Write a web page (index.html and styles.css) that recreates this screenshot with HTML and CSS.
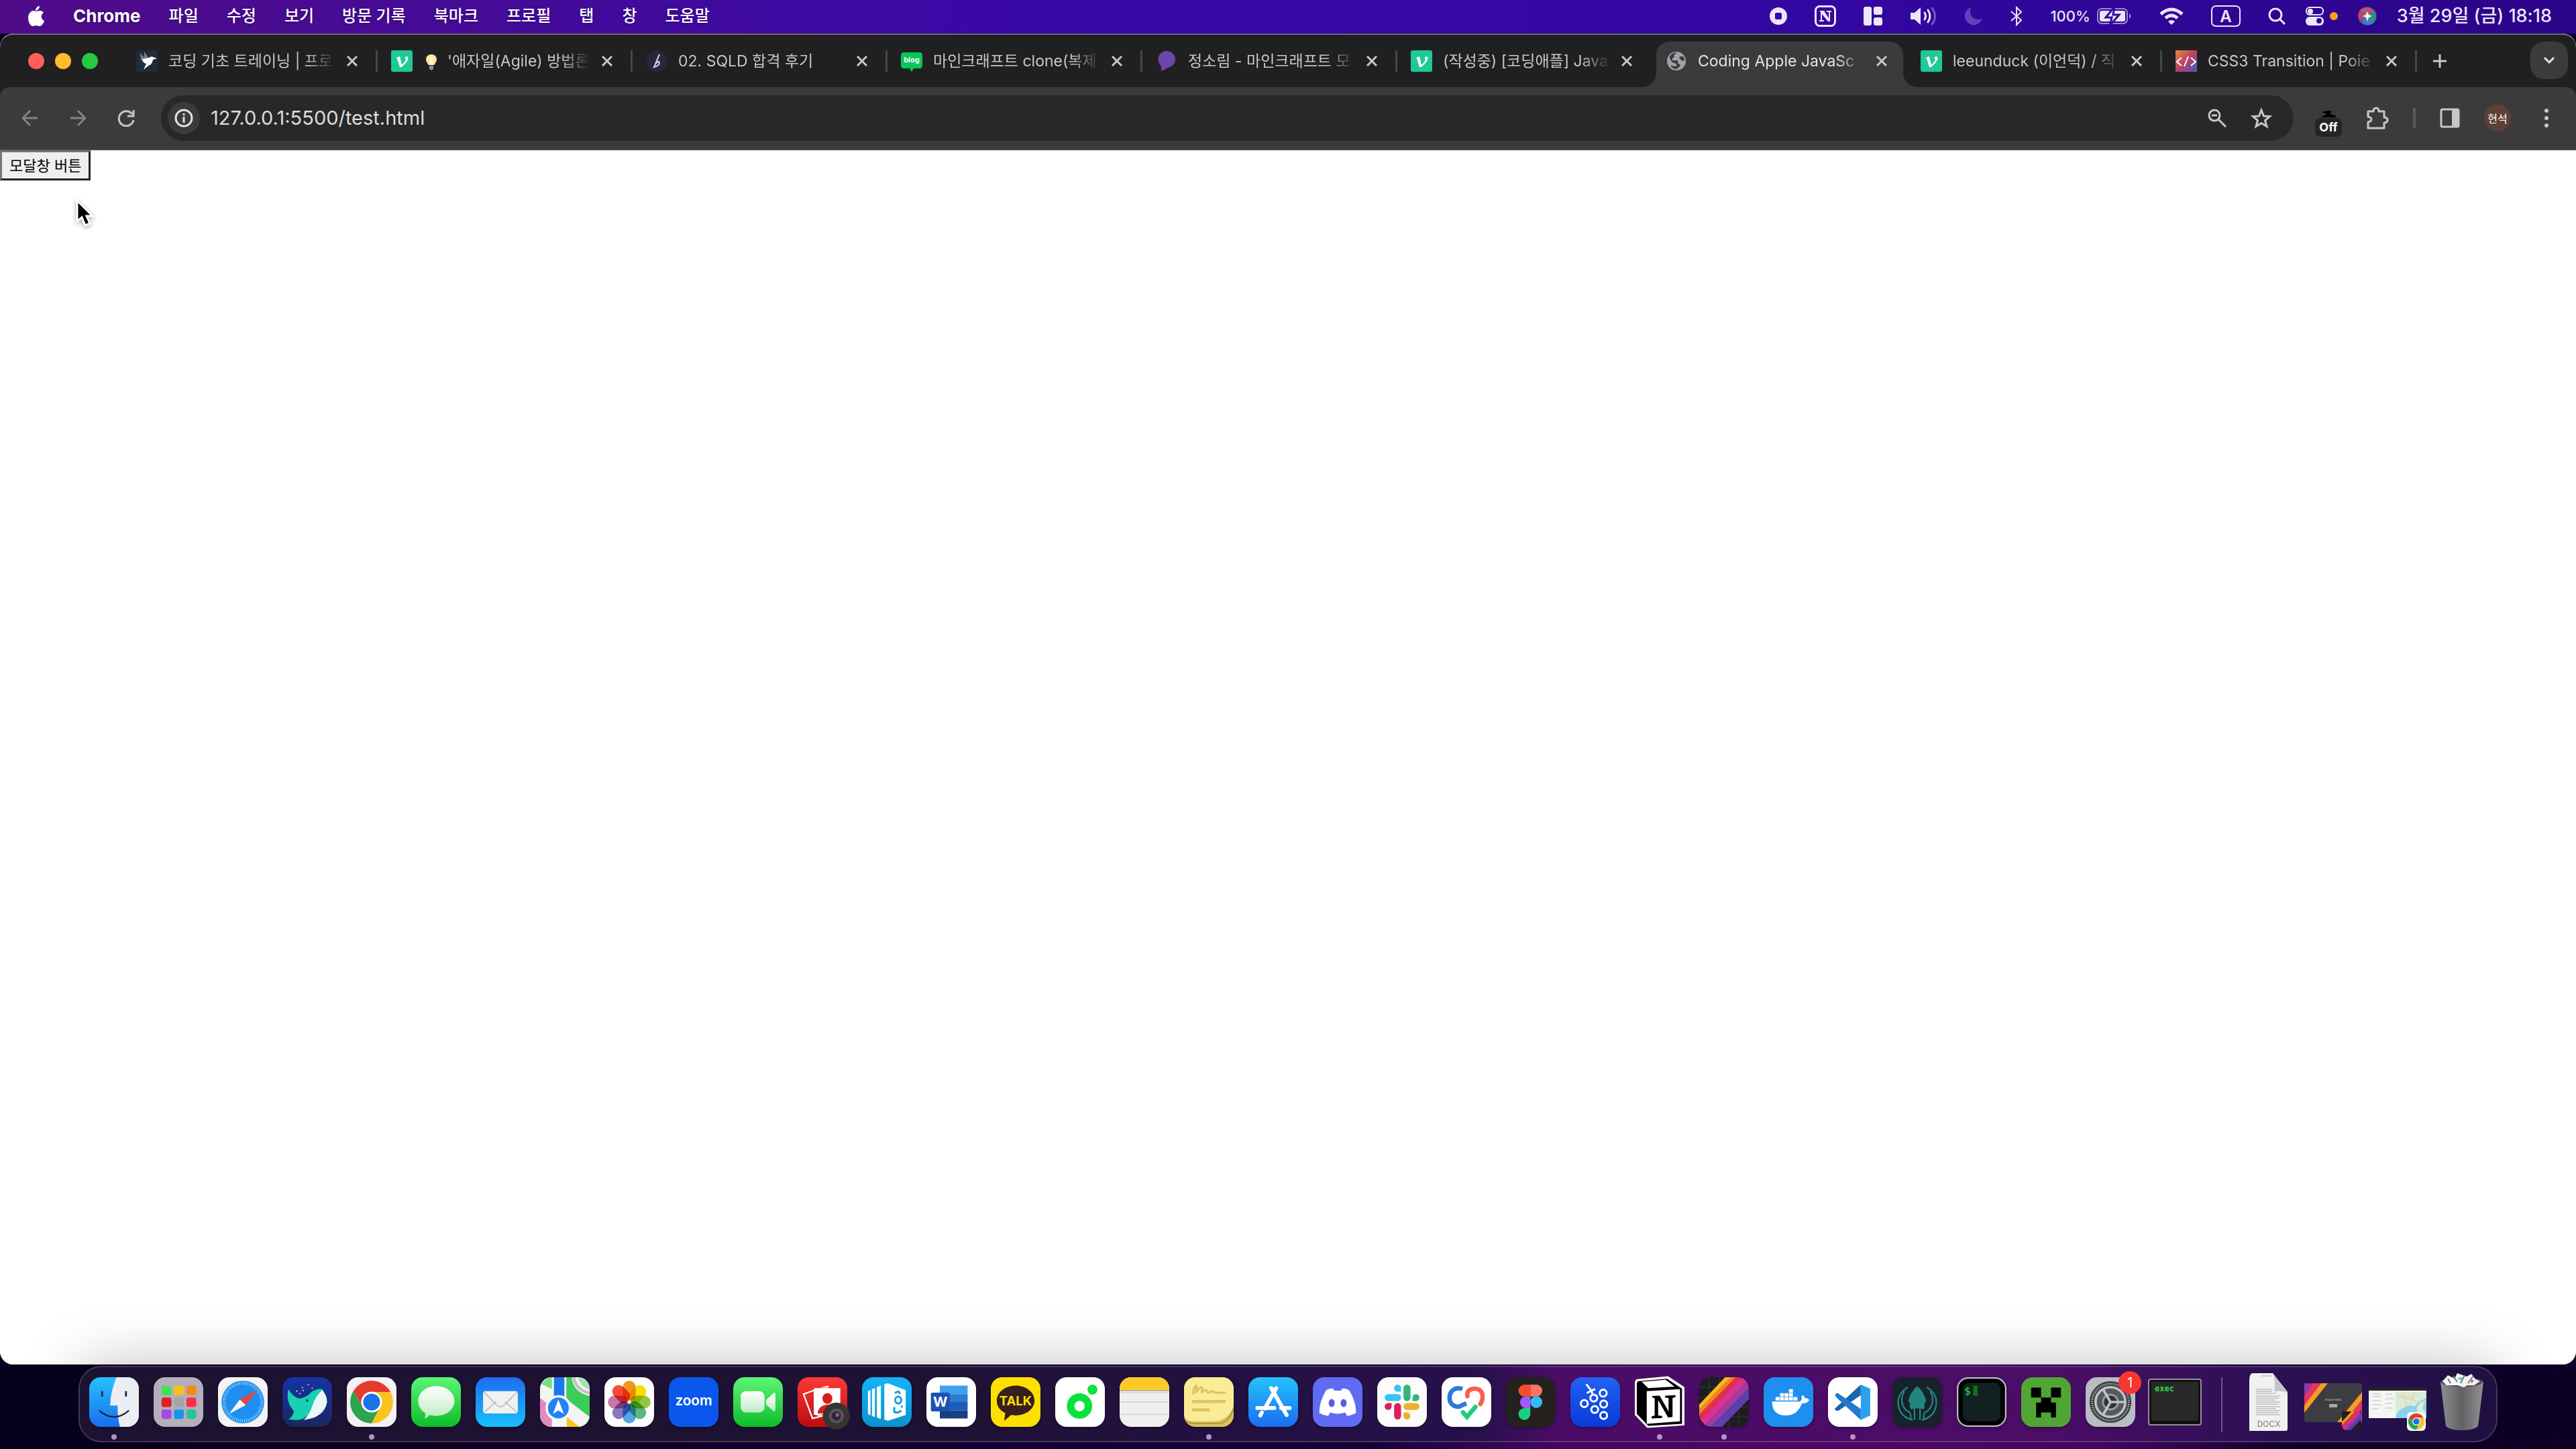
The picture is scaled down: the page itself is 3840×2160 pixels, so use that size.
FILE: index.html
```html
<!DOCTYPE html>
<html lang="ko">
<head>
  <meta charset="UTF-8">
  <meta name="viewport" content="width=device-width, initial-scale=1.0">
  <title>Coding Apple JavaScript</title>
  <link rel="stylesheet" href="styles.css">
</head>
<body>
  <!-- Shared symbols -->
  <svg class="symbols" aria-hidden="true">
    <symbol id="close" viewBox="0 0 16 16"><path d="M1 1l14 14M15 1L1 15" stroke="currentColor" stroke-width="3" fill="none"/></symbol>
    <symbol id="velog" viewBox="0 0 32 32">
      <rect width="32" height="32" rx="3" fill="#20c997"/>
      <path d="M8 11l5-2 3 13c5-5 7-8 5-10-1-2 2-4 4-2 2 4-3 9-9 15h-3l-4-13-2-1z" fill="#fff"/>
    </symbol>
    <symbol id="chrome" viewBox="0 0 100 100">
      <path d="M50 30H88A43 43 0 0 0 13 28L33 60A20 20 0 0 1 50 30" fill="#e33b2e"/>
      <path d="M13 28A43 43 0 0 0 50 93L67 60A20 20 0 0 1 33 60Z" fill="#2da44e"/>
      <path d="M88 30A43 43 0 0 1 50 93L67 60A20 20 0 0 0 50 30Z" fill="#fcc31e"/>
      <circle cx="50" cy="50" r="21" fill="#fff"/>
      <circle cx="50" cy="50" r="17" fill="#1a73e8"/>
    </symbol>
    <symbol id="stripes" viewBox="0 0 100 100">
      <rect width="100" height="100" fill="#1d1c20"/>
      <path d="M0 20H100M0 40H100M0 60H100M0 80H100M20 0V100M40 0V100M60 0V100M80 0V100" stroke="#444" stroke-width="1"/>
      <path d="M0 55L52 0H64L0 66Z" fill="#f9b61a"/>
      <path d="M0 66L64 0H74L0 76Z" fill="#f5822a"/>
      <path d="M0 76L74 0H84L2 85Z" fill="#ee2e38"/>
      <path d="M2 85L84 0H92L98 8L12 97Z" fill="#d8318f"/>
      <path d="M12 97L98 8L100 22L24 100Z" fill="#a33aa6"/>
      <path d="M24 100L100 22V44L46 100Z" fill="#5b3fae"/>
    </symbol>
  </svg>

  <header class="menubar">
    <nav class="menus">
      <a href="#" class="apple" aria-label="Apple">
        <svg viewBox="0 0 26 32" width="26" height="32"><path d="M18 1c0 4-3 7-6 7 0-4 3-7 6-7zM13 9c2 0 3-1 6-1 2 0 4 1 5 3-5 3-4 10 1 12-1 4-4 8-7 8-2 0-3-1-5-1s-3 1-5 1C4 31 1 24 1 19 1 12 5 8 9 8c2 0 3 1 4 1z" fill="#fff"/></svg>
      </a>
      <a href="#" class="app-name">Chrome</a>
      <a href="#">파일</a>
      <a href="#">수정</a>
      <a href="#">보기</a>
      <a href="#">방문 기록</a>
      <a href="#">북마크</a>
      <a href="#">프로필</a>
      <a href="#">탭</a>
      <a href="#">창</a>
      <a href="#">도움말</a>
    </nav>
    <div class="status">
      <svg viewBox="0 0 26 26" width="26" height="26"><circle cx="13" cy="13" r="13" fill="#ebe6f8"/><rect x="8" y="8" width="10" height="10" rx="2" fill="#3507a0"/></svg>
      <svg viewBox="0 0 32 32" width="32" height="32"><rect x="1.500" y="1.500" width="29" height="29" rx="6" fill="none" stroke="#ebe6f8" stroke-width="3"/><path d="M8 8h6l7 11v-9h-3V8h7v2h-2v14h-3L11 13v9h3v2H7v-2h2V10H8z" fill="#ebe6f8"/></svg>
      <svg viewBox="0 0 28 28" width="28" height="28" fill="#ebe6f8"><rect width="12" height="28" rx="3"/><rect x="15" width="13" height="12" rx="3"/><rect x="15" y="16" width="13" height="12" rx="3"/></svg>
      <svg viewBox="0 0 40 28" width="40" height="28" fill="none" stroke-width="3" stroke-linecap="round"><path d="M1 9h6l9-8v26l-9-8H1z" fill="#ebe6f8"/><g stroke="#ebe6f8"><path d="M22 9q3 5 0 10M27 5q6 9 0 18"/></g><path d="M33 2q9 12 0 24" stroke="#7757c0"/></svg>
      <svg viewBox="0 0 28 28" width="28" height="28"><path d="M10 1C6 12 14 22 27 18 23 27 14 30 7 25-3 18 0 4 10 1z" fill="#6141b5"/></svg>
      <svg viewBox="0 0 18 30" width="18" height="30"><path d="M1 8l15 13-7 7V2l7 7L1 22" fill="none" stroke="#ebe6f8" stroke-width="2"/></svg>
      <div class="battery">
        <span>100%</span>
        <svg viewBox="0 0 52 26" width="52" height="26"><rect x="1" y="2" width="44" height="22" rx="6" fill="none" stroke="#9d86d4" stroke-width="2"/><rect x="4" y="5" width="38" height="16" rx="3" fill="#ebe6f8"/><path d="M48 9v8q5-4 0-8" fill="#9d86d4"/><path d="M26-1L13 15h9l-3 12 14-16h-9z" fill="#ebe6f8" stroke="#3206a0" stroke-width="3"/></svg>
      </div>
      <svg viewBox="0 0 36 26" width="36" height="26" fill="none" stroke="#ebe6f8" stroke-width="5"><path d="M2 10q16-14 32 0M9 16q9-8 18 0"/><path d="M18 26l-5-5q5-4 10 0z" fill="#ebe6f8" stroke="none"/></svg>
      <svg viewBox="0 0 44 32" width="44" height="32"><rect x="1" y="1" width="42" height="30" rx="6" fill="none" stroke="#ebe6f8" stroke-width="2"/><text x="22" y="25" class="input-mark">A</text></svg>
      <div class="status-end">
        <svg viewBox="0 0 26 26" width="26" height="26" fill="none" stroke="#ebe6f8" stroke-width="3"><circle cx="11" cy="11" r="9"/><path d="M17 17l8 8"/></svg>
        <svg viewBox="0 0 48 28" width="48" height="28"><rect x="1" y="1" width="25" height="11" rx="5" fill="none" stroke="#ebe6f8" stroke-width="2"/><circle cx="7" cy="7" r="4" fill="#ebe6f8"/><rect y="15" width="27" height="13" rx="6" fill="#ebe6f8"/><circle cx="20" cy="21" r="4" fill="#3206a0"/><circle cx="42" cy="14" r="6" fill="#f9a11b"/></svg>
        <svg viewBox="0 0 28 28" width="28" height="28"><circle cx="14" cy="14" r="14" fill="#3b4c8c"/><path d="M14 14L3 5Q14-4 25 7z" fill="#b65577"/><path d="M14 14L25 7Q30 16 22 25z" fill="#27967f"/><path d="M14 14L3 22Q-2 12 3 5z" fill="#b4466f"/><path d="M14 14l8 11q-8 5-18-2z" fill="#3d7bd0"/><path d="M14 7l2 5 5 2-5 2-2 6-2-6-5-2 5-2z" fill="#e7fbff"/></svg>
        <time>3월 29일 (금) 18:18</time>
      </div>
    </div>
  </header>

  <main class="window">
    <div class="browser-chrome">
      <div class="tabbar">
        <div class="lights">
          <button class="light red" aria-label="닫기"></button>
          <button class="light yellow" aria-label="최소화"></button>
          <button class="light green" aria-label="전체 화면"></button>
        </div>
        <div class="tabs">
          <div class="tab">
            <svg class="favicon" viewBox="0 0 32 32"><rect width="32" height="32" rx="3" fill="#1f2c3d"/><path d="M6 4l7 8-6 1zM12 2l6 9-6 3z" fill="#777f89"/><path d="M5 14l14-3q4-3 6-1l6 2-6 2q-1 7-7 9l-7 6 4-9q-5-1-6-6z" fill="#fff"/></svg>
            <span class="tab-title">코딩 기초 트레이닝 | 프로</span>
            <button class="tab-close" aria-label="탭 닫기"><svg width="16" height="16"><use href="#close"/></svg></button>
          </div>
          <div class="tab">
            <svg class="favicon"><use href="#velog"/></svg>
            <span class="tab-title"><svg class="bulb" viewBox="0 0 16 24"><path d="M4 16Q0 11 0 7a8 7 0 0 1 16 0q0 4-4 9z" fill="#ffe9a0"/><path d="M6 14V7q2-3 4 0v7" fill="#fffbe5"/><path d="M5 17h6v5l-3 2-3-2z" fill="#8e8e8e"/></svg>'애자일(Agile) 방법론</span>
            <button class="tab-close" aria-label="탭 닫기"><svg width="16" height="16"><use href="#close"/></svg></button>
          </div>
          <div class="tab">
            <svg class="favicon" viewBox="0 0 32 32"><circle cx="16" cy="16" r="16" fill="#29263b"/><path d="M20 6L12 25q8-2 8-7 0-3-6 2" fill="none" stroke="#d5d3df" stroke-width="2"/></svg>
            <span class="tab-title">02. SQLD 합격 후기</span>
            <button class="tab-close" aria-label="탭 닫기"><svg width="16" height="16"><use href="#close"/></svg></button>
          </div>
          <div class="tab">
            <svg class="favicon" viewBox="0 0 32 32"><path d="M4 3h24q4 0 4 5v14q0 5-4 5h-9l-3 5-3-5H4q-4 0-4-5V8q0-5 4-5z" fill="#08c75b"/><text x="16" y="18" class="blog-mark">blog</text></svg>
            <span class="tab-title">마인크래프트 clone(복제</span>
            <button class="tab-close" aria-label="탭 닫기"><svg width="16" height="16"><use href="#close"/></svg></button>
          </div>
          <div class="tab">
            <svg class="favicon" viewBox="0 0 32 32"><path d="M16 1C24 1 29 7 29 14c0 9-8 10-15 14l-6 3v-7C-1 14 5 1 16 1z" fill="#6b46ae"/></svg>
            <span class="tab-title">정소림 - 마인크래프트 모</span>
            <button class="tab-close" aria-label="탭 닫기"><svg width="16" height="16"><use href="#close"/></svg></button>
          </div>
          <div class="tab before-active">
            <svg class="favicon"><use href="#velog"/></svg>
            <span class="tab-title">(작성중) [코딩애플] Java</span>
            <button class="tab-close" aria-label="탭 닫기"><svg width="16" height="16"><use href="#close"/></svg></button>
          </div>
          <div class="tab active">
            <svg class="favicon" viewBox="0 0 32 32"><circle cx="16" cy="16" r="14" fill="#9da1a8"/><path d="M18 4q-7 1-5 6-4 1-3 5h8v4l4 3q-2 4-7 6-5-1-8-5l9 1v-4l-6-2Q5 12 6 9q5-7 12-5zM20 10q5-2 7 0l1 6-5-1z" fill="#3b3b3b"/></svg>
            <span class="tab-title">Coding Apple JavaSc</span>
            <button class="tab-close" aria-label="탭 닫기"><svg width="16" height="16"><use href="#close"/></svg></button>
          </div>
          <div class="tab">
            <svg class="favicon"><use href="#velog"/></svg>
            <span class="tab-title">leeunduck (이언덕) / 직</span>
            <button class="tab-close" aria-label="탭 닫기"><svg width="16" height="16"><use href="#close"/></svg></button>
          </div>
          <div class="tab">
            <svg class="favicon" viewBox="0 0 32 32"><defs><linearGradient id="poi" x2="1" y2="1"><stop stop-color="#e68a42"/><stop offset=".5" stop-color="#b8405f"/><stop offset="1" stop-color="#4c58c8"/></linearGradient></defs><rect width="32" height="32" fill="url(#poi)"/><path d="M9 11l-7 6 7 6M23 11l7 6-7 6M19 9l-6 15" fill="none" stroke="#fff" stroke-width="2"/></svg>
            <span class="tab-title">CSS3 Transition | Poie</span>
            <button class="tab-close" aria-label="탭 닫기"><svg width="16" height="16"><use href="#close"/></svg></button>
          </div>
        </div>
        <button class="new-tab" aria-label="새 탭"><svg viewBox="0 0 20 20" width="20" height="20"><path d="M10 0v20M0 10h20" stroke="#c7c7c7" stroke-width="3"/></svg></button>
        <button class="tab-search" aria-label="탭 검색"><svg viewBox="0 0 16 10" width="16" height="10"><path d="M1 1l7 7 7-7" fill="none" stroke="#e3e3e3" stroke-width="3"/></svg></button>
      </div>

      <div class="toolbar">
        <div class="nav-buttons">
          <button aria-label="뒤로"><svg viewBox="0 0 24 24" width="24" height="24"><path d="M12 1L1 12l11 11M1 12h22" fill="none" stroke="#838383" stroke-width="3"/></svg></button>
          <button aria-label="앞으로"><svg viewBox="0 0 24 24" width="24" height="24"><path d="M12 1l11 11-11 11M23 12H1" fill="none" stroke="#838383" stroke-width="3"/></svg></button>
          <button aria-label="새로고침"><svg viewBox="0 0 26 26" width="26" height="26"><path d="M22 7A11 11 0 1 0 24 16M24 1v9h-9" fill="none" stroke="#c7c7c7" stroke-width="3"/></svg></button>
        </div>
        <div class="omnibox">
          <button class="site-info" aria-label="사이트 정보"><svg viewBox="0 0 28 28" width="28" height="28"><circle cx="14" cy="14" r="12" fill="none" stroke="#e3e3e3" stroke-width="3"/><path d="M14 12v9M14 7v3" stroke="#e3e3e3" stroke-width="3"/></svg></button>
          <input type="text" class="address" aria-label="주소창" value="127.0.0.1:5500/test.html">
          <button aria-label="확대/축소"><svg viewBox="0 0 28 28" width="28" height="28" fill="none" stroke="#c7c7c7" stroke-width="3"><circle cx="10" cy="10" r="8"/><path d="M16 16l11 11M6 10h8"/></svg></button>
          <button aria-label="북마크"><svg viewBox="0 0 32 32" width="32" height="32"><path d="M16 4l3.500 9 9 .5-7 6 2.500 9-8-5-8 5 2.500-9-7-6 9-.5z" fill="none" stroke="#c7c7c7" stroke-width="3"/></svg></button>
        </div>
        <div class="extensions">
          <button class="ext-off" aria-label="확장 프로그램"><svg viewBox="0 0 28 12" width="28" height="12"><path d="M4 4q8-5 15-2l-3 4 7 2v-1l3 4H2l6-3q4-2 2-3z" fill="#000"/></svg><span>Off</span></button>
          <button aria-label="확장 프로그램 메뉴"><svg viewBox="0 0 34 34" width="34" height="34"><path d="M3 7h8q0-5 4-5t4 5h8v9q5 0 5 4t-5 4v8H3v-9q5-1 5-4t-5-4z" fill="none" stroke="#c7c7c7" stroke-width="3" stroke-linejoin="round"/></svg></button>
          <span class="toolbar-divider"></span>
          <button aria-label="측면 패널"><svg viewBox="0 0 30 30" width="30" height="30"><rect x="2" y="2" width="26" height="26" rx="2" fill="none" stroke="#c7c7c7" stroke-width="3"/><path d="M18 2h10v26H18z" fill="#c7c7c7"/></svg></button>
          <button class="avatar">현석</button>
          <button aria-label="메뉴"><svg viewBox="0 0 6 28" width="6" height="28" fill="#c7c7c7"><circle cx="3" cy="3" r="3"/><circle cx="3" cy="14" r="3"/><circle cx="3" cy="25" r="3"/></svg></button>
        </div>
      </div>
    </div>

    <section class="page">
      <button class="modal-button">모달창 버튼</button>
      <svg class="cursor" viewBox="0 0 30 44" width="30" height="44"><path d="M4 3v31l7-6 5 12 7-3-5-11h9z" fill="#000" stroke="#fff" stroke-width="3"/></svg>
    </section>
  </main>

  <footer class="dock">
    <button class="app running" aria-label="Finder">
      <svg class="icon" viewBox="0 0 100 100"><defs><linearGradient id="g-blue" x2="0" y2="1"><stop stop-color="#24c3fb"/><stop offset="1" stop-color="#1a6df1"/></linearGradient></defs><rect width="100" height="100" fill="url(#g-blue)"/><path d="M55 0Q43 28 42 57h15q0 25 5 43h38V0z" fill="#ebedf2"/><path d="M26 28v11M74 28v11" stroke="#223345" stroke-width="4"/><path d="M20 67q30 26 60 0" fill="none" stroke="#172536" stroke-width="3"/></svg>
    </button>
    <button class="app" aria-label="Launchpad">
      <svg class="icon" viewBox="0 0 100 100"><rect width="100" height="100" fill="#b4afbb"/><g><rect x="16" y="17" width="20" height="19" rx="5" fill="#3fe24f"/><rect x="41" y="17" width="20" height="19" rx="5" fill="#fcbf19"/><rect x="66" y="17" width="20" height="19" rx="5" fill="#f28a1d"/><rect x="16" y="41" width="20" height="19" rx="5" fill="#d9231f"/><rect x="41" y="41" width="20" height="19" rx="5" fill="#a4a4a8"/><rect x="66" y="41" width="20" height="19" rx="5" fill="#f92e49"/><rect x="16" y="65" width="20" height="19" rx="5" fill="#a54be0"/><rect x="41" y="65" width="20" height="19" rx="5" fill="#1796f0"/><rect x="66" y="65" width="20" height="19" rx="5" fill="#28c495"/></g></svg>
    </button>
    <button class="app" aria-label="Safari">
      <svg class="icon" viewBox="0 0 100 100"><rect width="100" height="100" fill="#f3f3f3"/><circle cx="50" cy="50" r="43" fill="#1e8ff0"/><circle cx="50" cy="50" r="38" fill="none" stroke="#d8efff" stroke-width="6" stroke-dasharray="1 3"/><path d="M80 25L56 56 44 45z" fill="#f0403a"/><path d="M22 74l34-18-12-11z" fill="#f5f5f5"/></svg>
    </button>
    <button class="app" aria-label="Whale">
      <svg class="icon" viewBox="0 0 100 100"><defs><linearGradient id="g-whale" x2="0" y2="1"><stop stop-color="#1634a4"/><stop offset="1" stop-color="#1b2760"/></linearGradient></defs><rect width="100" height="100" fill="url(#g-whale)"/><path d="M79 24Q90 36 90 50 84 82 42 86 52 80 56 62 66 34 79 24z" fill="#e8f7f8"/><path d="M12 24Q22 42 36 43 50 40 58 30 68 22 82 24 66 38 60 58 52 86 28 86L12 85q9-5 11-17Q6 50 12 24z" fill="#19d0b0"/><circle cx="50" cy="47" r="2.500" fill="#1a3468"/><g fill="#f5b9c9"><circle cx="40" cy="21" r="1.500"/><circle cx="52" cy="15" r="1.500"/><circle cx="29" cy="28" r="1.500"/><circle cx="42" cy="27" r="1.500"/><circle cx="60" cy="22" r="1.500"/><circle cx="35" cy="33" r="1.500"/></g></svg>
    </button>
    <button class="app running" aria-label="Chrome">
      <svg class="icon" viewBox="0 0 100 100"><rect width="100" height="100" fill="#f2f1f4"/><use href="#chrome"/></svg>
    </button>
    <button class="app" aria-label="메시지">
      <svg class="icon" viewBox="0 0 100 100"><defs><linearGradient id="g-green" x2="0" y2="1"><stop stop-color="#5bf675"/><stop offset="1" stop-color="#0cbd2a"/></linearGradient><linearGradient id="g-bubble" x2="0" y2="1"><stop stop-color="#fff"/><stop offset="1" stop-color="#bdebc2"/></linearGradient></defs><rect width="100" height="100" fill="url(#g-green)"/><path d="M50 18C71 18 87 31 87 48S71 78 50 78q-8 0-13-2-4 6-11 7 4-5 2-11-14-9-14-24C14 31 30 18 50 18z" fill="url(#g-bubble)"/></svg>
    </button>
    <button class="app" aria-label="Mail">
      <svg class="icon" viewBox="0 0 100 100"><defs><linearGradient id="g-mail" x2="0" y2="1"><stop stop-color="#1d6cf0"/><stop offset="1" stop-color="#19bffb"/></linearGradient></defs><rect width="100" height="100" fill="url(#g-mail)"/><rect x="15" y="28" width="70" height="45" rx="5" fill="#f1f1f1"/><path d="M17 71l24-22M83 71L59 49M17 30l25 26q8 7 16 0l25-26" fill="none" stroke="#b5b5b5" stroke-width="2"/></svg>
    </button>
    <button class="app" aria-label="지도">
      <svg class="icon" viewBox="0 0 100 100"><rect width="100" height="100" fill="#f4f4f2"/><path d="M0 14L18 0H24V24L0 12z" fill="#76e07f"/><path d="M53 0H64Q66 30 100 38V80L53 44z" fill="#3ccc5c"/><path d="M68 0Q72 26 100 32" fill="none" stroke="#c2c2c4" stroke-width="6"/><path d="M76 0H100V26Q82 20 76 0z" fill="#a8dfae"/><path d="M0 42L24 60V100H0z" fill="#e08cc0"/><path d="M54 80L80 100H54z" fill="#fbc41e"/><path d="M28 0H49V60H28z" fill="#1b78ea"/><circle cx="37" cy="62" r="26" fill="#f6f6f6"/><circle cx="37" cy="62" r="21" fill="#2282f2"/><path d="M37 45l11 29-11-7-11 7z" fill="#fff"/></svg>
    </button>
    <button class="app" aria-label="사진">
      <svg class="icon" viewBox="0 0 100 100"><rect width="100" height="100" fill="#fdfdfd"/><g class="petals"><rect x="37" y="7" width="26" height="40" rx="13" fill="#f09a1e"/><rect x="37" y="7" width="26" height="40" rx="13" fill="#fbe000" transform="rotate(45 50 50)"/><rect x="37" y="7" width="26" height="40" rx="13" fill="#98c83c" transform="rotate(90 50 50)"/><rect x="37" y="7" width="26" height="40" rx="13" fill="#5cba80" transform="rotate(135 50 50)"/><rect x="37" y="7" width="26" height="40" rx="13" fill="#55a6e8" transform="rotate(180 50 50)"/><rect x="37" y="7" width="26" height="40" rx="13" fill="#8f79bf" transform="rotate(225 50 50)"/><rect x="37" y="7" width="26" height="40" rx="13" fill="#c878ae" transform="rotate(270 50 50)"/><rect x="37" y="7" width="26" height="40" rx="13" fill="#fb4b3c" transform="rotate(315 50 50)"/></g></svg>
    </button>
    <button class="app" aria-label="Zoom">
      <svg class="icon" viewBox="0 0 100 100"><rect width="100" height="100" fill="#0b57ee"/><text x="50" y="57" class="zoom-mark">zoom</text></svg>
    </button>
    <button class="app" aria-label="FaceTime">
      <svg class="icon" viewBox="0 0 100 100"><rect width="100" height="100" fill="url(#g-green)"/><rect x="15" y="28" width="48" height="43" rx="11" fill="url(#g-bubble)"/><path d="M66 46l16-15q3 0 3 3v32q0 3-3 3L66 55z" fill="url(#g-bubble)"/></svg>
    </button>
    <button class="app" aria-label="Photo Booth">
      <svg class="icon open" viewBox="0 0 100 100"><defs><linearGradient id="g-red" x2="0" y2="1"><stop stop-color="#fb3a36"/><stop offset="1" stop-color="#bd0b10"/></linearGradient></defs><rect width="100" height="100" rx="22" fill="url(#g-red)"/><path d="M12 34l22-8v48l16 4-20 5z" fill="none" stroke="#fff" stroke-width="3"/><path d="M45 21l17-4v4M33 22h53v53H33z" fill="#fff"/><ellipse cx="60" cy="43" rx="10" ry="11" fill="#d81e1e"/><path d="M40 73q2-16 20-18 18 2 20 18z" fill="#d81e1e"/><circle cx="78" cy="78" r="27" fill="#353535"/><circle cx="78" cy="78" r="15" fill="#555"/><circle cx="78" cy="78" r="9" fill="#262637"/><circle cx="80" cy="76" r="4" fill="#a44a86"/></svg>
    </button>
    <button class="app" aria-label="반디집">
      <svg class="icon" viewBox="0 0 100 100"><defs><linearGradient id="g-cyan" x2="0" y2="1"><stop stop-color="#12b4f8"/><stop offset="1" stop-color="#0b92d0"/></linearGradient></defs><rect width="100" height="100" fill="url(#g-cyan)"/><path d="M12 28l5-2v51l-5-3zM20 24l6-2v58l-6-2zM30 20l8-3v67l-8-3zM45 14l7-2v76l-7-3zM52 12l36 14v50L52 88z" fill="#fff"/><path d="M66 32q9-7 10 2M65 60v10q8 3 14-3M80 57v4" stroke="#0da0e2" stroke-width="4" fill="none"/><ellipse cx="73" cy="46" rx="6" ry="7" fill="none" stroke="#0da0e2" stroke-width="4"/></svg>
    </button>
    <button class="app" aria-label="Word">
      <svg class="icon" viewBox="0 0 100 100"><rect width="100" height="100" fill="#fff"/><path d="M27 17h56v17H27z" fill="#3ea2ea"/><path d="M27 34h56v16H27z" fill="#2a7bd4"/><path d="M27 50h56v17H27z" fill="#1b5cbe"/><path d="M27 67h56v16H27z" fill="#173f83"/><rect x="9" y="31" width="38" height="38" rx="3" fill="#1a52b4"/><text x="28" y="60" class="word-mark">W</text></svg>
    </button>
    <button class="app" aria-label="카카오톡">
      <svg class="icon" viewBox="0 0 100 100"><rect width="100" height="100" fill="#fce100"/><path d="M50 17c21 0 38 13 38 30S71 77 50 77l-9-1-14 12 2-16Q12 64 12 47c0-17 17-30 38-30z" fill="#3a1d1e"/><text x="50" y="57" class="talk-mark">TALK</text></svg>
    </button>
    <button class="app" aria-label="멜론">
      <svg class="icon" viewBox="0 0 100 100"><rect width="100" height="100" fill="#fff"/><circle cx="49" cy="58" r="18" fill="none" stroke="#08e33c" stroke-width="15"/><circle cx="75" cy="25" r="10" fill="#08e33c"/></svg>
    </button>
    <button class="app" aria-label="메모">
      <svg class="icon" viewBox="0 0 100 100"><rect width="100" height="100" fill="#f0eff0"/><path d="M0 0H100V26H0z" fill="#fcc927"/><path d="M0 27H100" stroke="#aaa29b" stroke-width="2"/><path d="M0 31H100" stroke="#b4b4b4" stroke-width="2" stroke-dasharray="2 2"/><path d="M0 50H100M0 75H100" stroke="#cfcfd3" stroke-width="2"/></svg>
    </button>
    <button class="app running" aria-label="스티커">
      <svg class="icon" viewBox="0 0 100 100"><rect width="100" height="100" fill="#dcc25f"/><path d="M0 83q4 10 20 10h55q18-7 25-30" fill="none" stroke="#b79835" stroke-width="3"/><path d="M0 0H100V56Q92 86 60 89H20Q2 88 0 76z" fill="#f9ec95"/><path d="M18 35Q19 20 24 17q3 0-1 15 8-12 13-12 2 1-1 11 7-7 10-5 1 6 5 5 5-5 9-1 5 2 25 1" fill="none" stroke="#dbc45d" stroke-width="4"/><path d="M16 49h68M16 66h36" fill="none" stroke="#dbc45d" stroke-width="6"/></svg>
    </button>
    <button class="app" aria-label="App Store">
      <svg class="icon" viewBox="0 0 100 100"><rect width="100" height="100" fill="url(#g-blue)"/><path d="M56 22L33 63M46 22l31 54M18 62h34M66 62h17M27 71l-3 6" stroke="#fff" stroke-width="8" stroke-linecap="round"/></svg>
    </button>
    <button class="app" aria-label="Discord">
      <svg class="icon" viewBox="0 0 100 100"><rect width="100" height="100" fill="#606bf3"/><path d="M27 26q8-4 14-3l2 4h14l2-4q6-1 14 3 14 22 14 46-9 5-18 6l-4-7q-15 5-30 0l-4 7q-10-1-18-6 0-24 14-46z" fill="#fff"/><ellipse cx="38" cy="52" rx="6" ry="8" fill="#5560df"/><ellipse cx="62" cy="52" rx="6" ry="8" fill="#5560df"/></svg>
    </button>
    <button class="app" aria-label="Slack">
      <svg class="icon" viewBox="0 0 100 100"><rect width="100" height="100" fill="#fbfbfb"/><g fill="#36c5f0"><rect x="15" y="34" width="33" height="14" rx="7"/><path d="M48 29H41a7 7 0 1 1 7-7z"/></g><g fill="#2eb67d"><rect x="53" y="15" width="14" height="33" rx="7"/><path d="M71 48V41a7 7 0 1 1 7 7z"/></g><g fill="#e01e5a"><rect x="34" y="52" width="14" height="33" rx="7"/><path d="M29 52v7a7 7 0 1 1-7-7z"/></g><g fill="#ecb22e"><rect x="53" y="52" width="32" height="14" rx="7"/><path d="M53 71h7a7 7 0 1 1-7 7z"/></g></svg>
    </button>
    <button class="app" aria-label="체크">
      <svg class="icon" viewBox="0 0 100 100"><rect width="100" height="100" fill="#fff"/><path d="M42 24C27 18 16 28 16 42s14 22 26 14l8-3" fill="none" stroke="#2a7ad8" stroke-width="9"/><path d="M52 38c-2-12 8-15 14-15 18 0 20 18 12 31" fill="none" stroke="#f9604b" stroke-width="9" stroke-linecap="round"/><path d="M43 71l8 9 17-20" fill="none" stroke="#21cb7c" stroke-width="9" stroke-linecap="round"/></svg>
    </button>
    <button class="app" aria-label="Figma">
      <svg class="icon" viewBox="0 0 100 100"><rect width="100" height="100" fill="#25211f"/><path d="M49 15H37a12 12 0 0 0 0 24H49z" fill="#f24e2e"/><path d="M49 15H61a12 12 0 0 1 0 24H49z" fill="#fb7360"/><path d="M49 39H37a12 12 0 0 0 0 23H49z" fill="#a259ff"/><circle cx="61" cy="50" r="12" fill="#36b9f6"/><path d="M49 62H37a12 12 0 1 0 12 12z" fill="#19cf81"/></svg>
    </button>
    <button class="app" aria-label="그래프">
      <svg class="icon" viewBox="0 0 100 100"><defs><linearGradient id="g-graph" x2="0" y2="1"><stop stop-color="#2262f4"/><stop offset="1" stop-color="#0839d8"/></linearGradient></defs><rect width="100" height="100" fill="url(#g-graph)"/><g fill="none" stroke="#fff" stroke-width="4"><circle cx="66" cy="32" r="7"/><circle cx="47" cy="42" r="7"/><circle cx="28" cy="53" r="7"/><circle cx="67" cy="54" r="7"/><circle cx="49" cy="65" r="7"/><circle cx="67" cy="77" r="7"/><path d="M32 14l10 13 8-3M42 27l-9 5M42 27l3 8"/></g></svg>
    </button>
    <button class="app running" aria-label="Notion">
      <svg class="icon open" viewBox="0 0 100 100"><path d="M3 4L67-2 100 20V97L25 102 0 76V9z" fill="#fff"/><path d="M6 8L65 3 95 23V94L27 98 4 74V12z" fill="#000"/><path d="M14 9l48-4 18 14-53 3zM24 28l67-4v65l-67 5z" fill="#fff"/><path d="M35 38l15-1 18 32V42l-7-1v-4l21-1v4l-6 2v38l-9 1-20-35v31l8 1v4l-21 1v-4l6-2V42l-5-1z" fill="#000"/></svg>
    </button>
    <button class="app running" aria-label="Gifox">
      <svg class="icon"><use href="#stripes"/></svg>
    </button>
    <button class="app" aria-label="Docker">
      <svg class="icon" viewBox="0 0 100 100"><rect width="100" height="100" fill="#1d8fee"/><path d="M17 49h56q6-4 3-11 5-4 7 4 6 0 9 4-4 7-15 7-9 24-32 24-28 0-28-28z" fill="#fff"/><path d="M24 40h8v7h-8zM33 40h8v7h-8zM42 40h8v7h-8zM51 40h8v7h-8zM60 40h8v7h-8zM33 32h8v7h-8zM42 32h8v7h-8zM51 32h8v7h-8zM51 24h8v7h-8z" fill="#fff"/></svg>
    </button>
    <button class="app running" aria-label="VS Code">
      <svg class="icon" viewBox="0 0 100 100"><rect width="100" height="100" fill="#fff"/><path d="M18 68q-5-2-4-5L66 15v21L22 67z" fill="#1b65ab"/><path d="M14 36q1-4 6-4l46 32v22L17 41z" fill="#2279ce"/><path d="M66 15l19 8v54l-19 9z" fill="#2ba0ee"/></svg>
    </button>
    <button class="app" aria-label="GitKraken">
      <svg class="icon" viewBox="0 0 100 100"><rect width="100" height="100" fill="#17222a"/><path d="M50 18q12 9 18 29 0 3-4 6 3 8-2 12l-5-2v23h-3V63h-8v23h-3V63l-5 2q-5-4-2-12-4-3-4-6 6-20 18-29z" fill="#23857f"/><path d="M31 20Q6 36 13 61q5 20 28 25M24 28q-12 22 4 39 9 4 9 10v9M69 20q25 16 18 41-5 20-28 25M76 28q12 22-4 39-9 4-9 10v9" fill="none" stroke="#23857f" stroke-width="3"/></svg>
    </button>
    <button class="app" aria-label="iTerm">
      <svg class="icon" viewBox="0 0 100 100"><rect width="100" height="100" fill="#b9bcc7"/><rect x="3" y="3" width="94" height="94" rx="20" fill="#000"/><rect x="12" y="11" width="76" height="78" rx="13" fill="#132021"/><text x="15" y="35" class="term-mark">$</text><path d="M33 17h9v20h-9z" fill="#126f21"/></svg>
    </button>
    <button class="app" aria-label="Minecraft">
      <svg class="icon" viewBox="0 0 100 100"><rect width="100" height="100" fill="#51a534"/><path d="M20 21h20v20H20zM60 21h20v20H60zM40 41h20v10h10v30H60V71H40v10H30V51h10z" fill="#000"/></svg>
    </button>
    <button class="app" aria-label="시스템 설정">
      <svg class="icon" viewBox="0 0 100 100"><rect width="100" height="100" fill="#b8bdc3"/><circle cx="50" cy="50" r="42" fill="#383a3d"/><circle cx="50" cy="50" r="37" fill="none" stroke="#a8abaf" stroke-width="4" stroke-dasharray="2 2"/><circle cx="50" cy="50" r="30" fill="#55585c" stroke="#c0c2c5" stroke-width="5"/><circle cx="50" cy="50" r="15" fill="#303235" stroke="#97999c" stroke-width="4"/><path d="M50 50h30M50 50L35 24M50 50L35 76" stroke="#c0c2c5" stroke-width="5"/></svg>
      <span class="badge">1</span>
    </button>
    <button class="app" aria-label="exec">
      <svg class="icon wide" viewBox="0 0 80 74"><rect x="1" y="3" width="78" height="68" rx="3" fill="#111" stroke="#929292" stroke-width="2"/><rect x="5" y="7" width="70" height="58" fill="#282828"/><text x="10" y="21" class="exec-mark">exec</text></svg>
    </button>
    <span class="dock-divider"></span>
    <button class="app" aria-label="문서">
      <svg class="file" viewBox="0 0 88 88"><path d="M15 10q1-9 5-9h30l22 28v55q0 3-3 3H15z" fill="#f1f1f1"/><path d="M50 1q5 10 2 27 12-2 20 3z" fill="#c5c5c5"/><path d="M33 5h16M25 25h24M25 28h24M25 31h30M25 35h36M25 38h34M25 41h28M25 44h36M25 47h34M25 51h36M25 54h30M25 57h36M25 60h33M25 63h36" stroke="#a5a5a5" stroke-width="1"/><text x="44" y="81" class="docx-mark">DOCX</text></svg>
    </button>
    <button class="app" aria-label="Gifox 창">
      <svg class="file" viewBox="0 0 88 88"><rect x="1" y="16" width="86" height="58" rx="3" fill="#3d3d40"/><path d="M1 16h13L1 35z" fill="#8c39a9"/><path d="M14 16h12L1 49V35z" fill="#e53563"/><path d="M26 16h10L1 60V49z" fill="#f69b25"/><path d="M50 74l37-45v12L60 74z" fill="#f69b25"/><path d="M60 74l27-33v14L70 74z" fill="#e53563"/><path d="M70 74l17-19v19z" fill="#7d3fac"/><text x="44" y="42" class="tiny-mark">Drop a Video</text><rect x="38" y="47" width="12" height="5" rx="1" fill="#aaa"/><svg x="57" y="58" width="28" height="28"><use href="#stripes"/></svg></svg>
    </button>
    <button class="app" aria-label="Chrome 창">
      <svg class="file" viewBox="0 0 88 88"><rect x="1" y="23" width="86" height="45" fill="#f4f5f5"/><path d="M1 23h86v4H1z" fill="#252525"/><path d="M41 29h46v39H41z" fill="#d8ead8"/><path d="M87 38q-12 4-18 13-6-5-16 2-10 3-12 15h46z" fill="#8bd2ef"/><path d="M72 54q6-13 13-12l-4 11 6 9-12-2z" fill="#dbebd8"/><path d="M44 34l40 12M51 29l8 24M70 29l-8 20" stroke="#f2ca8c" stroke-width="1"/><path d="M6 32h12M6 36h14M6 42h12M6 48h14M6 54h10M26 32h10M26 39h12M26 46h10M26 53h12" stroke="#bbb" stroke-width="1"/><rect x="58" y="59" width="28" height="28" rx="6" fill="#f5f5f5"/><use href="#chrome" x="58" y="59" width="28" height="28"/></svg>
    </button>
    <button class="app" aria-label="휴지통">
      <svg class="file" viewBox="0 0 88 88"><defs><linearGradient id="g-trash"><stop stop-color="#8e8e90"/><stop offset=".5" stop-color="#626264"/><stop offset="1" stop-color="#929294"/></linearGradient></defs><path d="M12 14q32-12 64 0L68 80q-6 6-24 6t-24-6z" fill="url(#g-trash)"/><ellipse cx="44" cy="14" rx="31" ry="7" fill="#4c4c4e"/><path d="M15 13l8-9 10 5 4-8 14 5 7-4 6 8 7 3-9 6H52l-5 3-10-3H21z" fill="#f3f3f3"/><path d="M31 5l6 9M48 4l-6 12M61 5l-8 11M23 9l4 7" stroke="#77777c" stroke-width="2"/><path d="M38 8l8-1-5 5z" fill="#57bfca"/><path d="M57 10l5 2-4 4z" fill="#c45b6e"/></svg>
    </button>
  </footer>
</body>
</html>
```

FILE: styles.css
```css
* {
  box-sizing: border-box;
}
body {
  font-family: Inter, 'Noto Sans CJK KR', sans-serif;
  margin: 0;
  min-height: 100vh;
  display: flex;
  flex-direction: column;
  background:
    radial-gradient(ellipse 680px 200px at 71% 100%, #5a0874 0%, #4b096b 60%, transparent 100%),
    linear-gradient(90deg, #07001c, #15003c 40%, #1b0747 70%, #0d0026);
  overflow: hidden;
}
button {
  font-family: inherit;
  border: none;
  padding: 0;
  background: none;
  display: flex;
  align-items: center;
  justify-content: center;
}
svg {
  display: block;
  flex-shrink: 0;
}
.symbols {
  position: absolute;
  width: 0;
  height: 0;
}

/* Menu bar */
.menubar {
  height: 50px;
  padding: 0 36px 2px 41px;
  display: flex;
  justify-content: space-between;
  align-items: center;
  background: linear-gradient(90deg, #4f0c88, #440b99 20%, #3908a8 40%, #3307a2 70%, #2b0489);
  color: #fff;
  font-size: 24px;
  line-height: 32px;
  font-weight: 500;
}
.menus,
.status,
.status-end,
.battery {
  display: flex;
  align-items: center;
}
.menus {
  gap: 42px;
}
.menus a {
  color: #fff;
  text-decoration: none;
  white-space: nowrap;
  text-shadow: 0 2px 4px rgba(0, 0, 0, 0.3);
}
.menus .app-name {
  font-size: 26px;
  font-weight: 700;
}
.status {
  gap: 41px;
  color: #ebe6f8;
}
.status-end {
  gap: 30px;
}
.status time {
  font-size: 27px;
  white-space: nowrap;
}
.battery {
  gap: 10px;
  font-size: 22px;
}
.input-mark {
  font-size: 24px;
  font-weight: 600;
  fill: #ebe6f8;
  text-anchor: middle;
}

/* Browser window */
.window {
  flex: 1;
  display: flex;
  flex-direction: column;
  border-radius: 20px;
  overflow: hidden;
  background-color: #fff;
}
.browser-chrome {
  background-color: #202020;
  border-top: 2px solid #6a6a6a;
  border-radius: 20px 20px 0 0;
}
.tabbar {
  height: 78px;
  display: flex;
}
.lights {
  width: 183px;
  padding-left: 42px;
  display: flex;
  align-items: center;
  gap: 16px;
  flex-shrink: 0;
}
.light {
  width: 24px;
  height: 24px;
  border-radius: 50%;
}
.red {
  background-color: #ff5f57;
}
.yellow {
  background-color: #febc2e;
}
.green {
  background-color: #28c840;
}
.tabs {
  display: flex;
  padding-top: 10px;
}
.tab {
  position: relative;
  z-index: 0;
  width: 380px;
  height: 68px;
  padding: 0 30px 10px 20px;
  display: flex;
  align-items: center;
  gap: 16px;
  color: #c7c7c7;
}
.tab::after {
  content: '';
  position: absolute;
  right: 0;
  top: 13px;
  width: 3px;
  height: 32px;
  background-color: #474747;
}
.tab.before-active::after {
  display: none;
}
.tab.active {
  color: #e3e3e3;
}
.tab.active::before {
  content: '';
  position: absolute;
  z-index: -1;
  inset: 0 6px;
  border-radius: 20px 20px 0 0;
  background-color: #3b3b3b;
}
.tab.active::after {
  z-index: -1;
  top: auto;
  bottom: 0;
  left: -14px;
  right: -14px;
  width: auto;
  height: 20px;
  background:
    radial-gradient(circle at 0 0, transparent 19px, #3b3b3b 20px) left / 20px 20px no-repeat,
    radial-gradient(circle at 100% 0, transparent 19px, #3b3b3b 20px) right / 20px 20px no-repeat;
}
.favicon {
  width: 32px;
  height: 32px;
}
.tab-title {
  flex: 1;
  overflow: hidden;
  white-space: nowrap;
  font-size: 23px;
  line-height: 32px;
  -webkit-mask-image: linear-gradient(90deg, #000 82%, transparent);
  mask-image: linear-gradient(90deg, #000 82%, transparent);
}
.bulb {
  display: inline-block;
  width: 16px;
  height: 24px;
  margin: 0 16px 0 4px;
  vertical-align: middle;
}
.tab-close {
  color: #c7c7c7;
  width: 16px;
  height: 16px;
}
.blog-mark {
  font-size: 11px;
  font-weight: 700;
  fill: #fff;
  text-anchor: middle;
}
.new-tab {
  width: 68px;
}
.tab-search {
  width: 56px;
  height: 56px;
  margin: 10px 12px 0 auto;
  border-radius: 20px;
  background-color: #3b3b3b;
}

/* Toolbar */
.toolbar {
  height: 94px;
  padding: 0 41px 0 33px;
  display: flex;
  align-items: center;
  background-color: #3b3b3b;
  border-bottom: 2px solid #4a4a4a;
  border-radius: 14px 14px 0 0;
}
.nav-buttons {
  display: flex;
  gap: 47px;
  margin-right: 39px;
}
.omnibox {
  flex: 1;
  height: 68px;
  padding: 0 32px 0 10px;
  display: flex;
  align-items: center;
  gap: 36px;
  border-radius: 34px;
  background-color: #282828;
}
.site-info {
  width: 48px;
  height: 48px;
  border-radius: 50%;
  background-color: #3b3b3b;
}
.address {
  flex: 1;
  margin-left: -20px;
  padding: 0;
  border: none;
  outline: none;
  background: none;
  color: #dcdcdc;
  font-family: inherit;
  font-size: 29px;
  line-height: 36px;
}
.extensions {
  display: flex;
  align-items: center;
  gap: 36px;
  margin-left: 32px;
}
.ext-off {
  width: 40px;
  flex-direction: column;
  padding-top: 16px;
  color: #fff;
}
.ext-off span {
  width: 40px;
  border-radius: 8px;
  background-color: #242424;
  font-size: 18px;
  line-height: 28px;
  font-weight: 700;
}
.toolbar-divider {
  width: 4px;
  height: 32px;
  border-radius: 2px;
  background-color: #5a5a5a;
}
.avatar {
  width: 40px;
  height: 40px;
  margin-right: 14px;
  border-radius: 50%;
  background-color: #5d4037;
  color: #fff;
  font-size: 16px;
  white-space: nowrap;
}

/* Page content */
.page {
  position: relative;
  flex: 1;
  background-color: #fff;
}
.modal-button {
  padding: 2px 11px 0;
  border: 3px solid;
  border-color: #767676 #222 #222 #767676;
  background-color: #efefef;
  color: #000;
  font-size: 22px;
  line-height: 37px;
}
.cursor {
  position: absolute;
  left: 111px;
  top: 72px;
  filter: drop-shadow(0 2px 3px rgba(0, 0, 0, 0.35));
}

/* Dock */
.dock {
  position: relative;
  z-index: 1;
  align-self: center;
  display: flex;
  margin: 2px 0 10px;
  padding: 15px 3px 21px;
  border: 2px solid rgba(255, 255, 255, 0.16);
  border-radius: 34px;
  background: linear-gradient(90deg, #1e1232, #1e1234 35%, #27104c 58%, #4a0c66 61%, #4b0d66 82%, #2d1055 90%, #1f1040);
  box-shadow: 0 0 90px rgba(0, 0, 0, 0.26);
}
.app {
  position: relative;
  width: 96px;
  height: 74px;
}
.icon {
  width: 74px;
  height: 74px;
  border-radius: 17px;
  box-shadow: 0 2px 4px rgba(0, 0, 0, 0.3);
}
.icon.open {
  overflow: visible;
  box-shadow: none;
}
.icon.wide {
  width: 80px;
  border-radius: 0;
  box-shadow: none;
}
.file {
  width: 88px;
  height: 88px;
}
.running::after {
  content: '';
  position: absolute;
  left: 44px;
  top: 85px;
  width: 8px;
  height: 8px;
  border-radius: 50%;
  background-color: #b193c6;
}
.dock-divider {
  width: 2px;
  height: 82px;
  margin: 0 21px;
  margin-bottom: -8px;
  background-color: rgba(255, 255, 255, 0.28);
}
.badge {
  position: absolute;
  right: 2px;
  top: -9px;
  width: 34px;
  height: 34px;
  border-radius: 50%;
  background-color: #f8362f;
  color: #fff;
  font-size: 20px;
  line-height: 34px;
}
.petals rect {
  mix-blend-mode: multiply;
}
.zoom-mark {
  font-size: 28px;
  font-weight: 600;
  fill: #fff;
  text-anchor: middle;
}
.word-mark {
  font-size: 28px;
  font-weight: 700;
  fill: #fff;
  text-anchor: middle;
}
.talk-mark {
  font-size: 25px;
  font-weight: 700;
  fill: #fce100;
  text-anchor: middle;
}
.term-mark {
  font-family: 'DejaVu Sans Mono', monospace;
  font-size: 22px;
  fill: #2ddb4c;
}
.exec-mark {
  font-family: 'DejaVu Sans Mono', monospace;
  font-size: 12px;
  font-weight: 700;
  fill: #2ddb4c;
}
.docx-mark {
  font-size: 12px;
  fill: #777;
  text-anchor: middle;
}
.tiny-mark {
  font-size: 4px;
  fill: #ccc;
  text-anchor: middle;
}
```
